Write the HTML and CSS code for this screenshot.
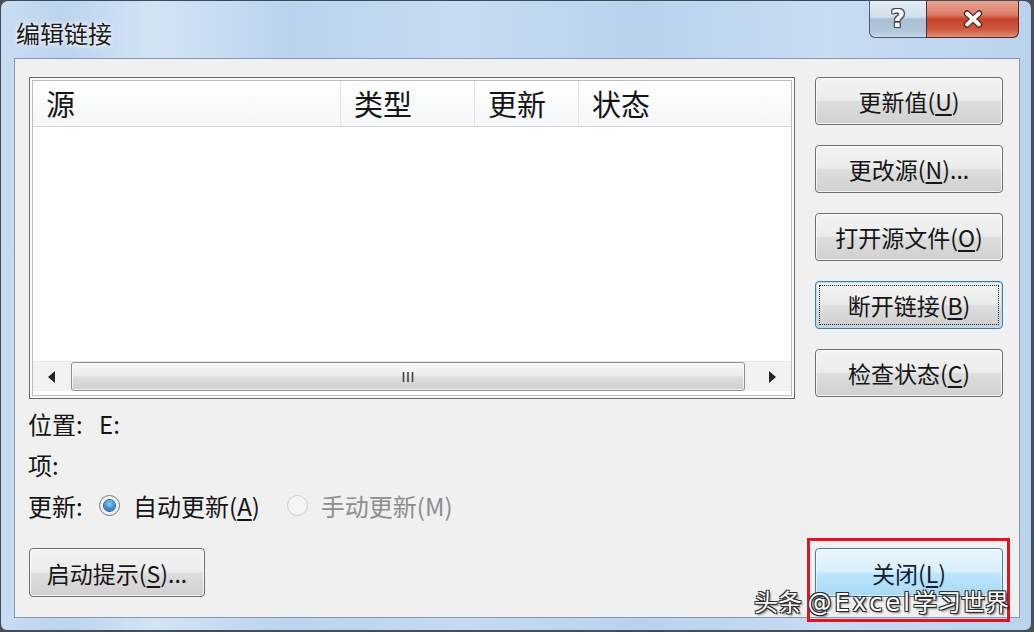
FILE: index.html
```html
<!DOCTYPE html>
<html>
<head>
<link rel="stylesheet" href="styles.css">
</head>
<body>

<div class="window">
  <!-- 标题栏 -->
  <div class="titlebar">
    <span class="title">编辑链接</span>
    <div class="caption-btns">
      <span class="cap help">?</span>
      <span class="cap close">
        <svg width="22" height="18" viewBox="0 0 22 18">
          <path d="M5 3.5 L17 14.5 M17 3.5 L5 14.5" stroke="#4a2620" stroke-width="6.4" stroke-linecap="round"/>
          <path d="M5 3.5 L17 14.5 M17 3.5 L5 14.5" stroke="#fff" stroke-width="3.8" stroke-linecap="round"/>
        </svg>
      </span>
    </div>
  </div>

  <!-- 对话框内容 -->
  <div class="client">
    <div class="left">
      <div class="listbox">
        <div class="list-frame">
          <div class="list-head">
            <div class="col c1">源</div>
            <div class="col c2">类型</div>
            <div class="col c3">更新</div>
            <div class="col c4">状态</div>
          </div>
          <div class="list-body"></div>
          <div class="hscroll">
            <div class="arrow">
              <svg width="8" height="12" viewBox="0 0 8 12"><polygon points="7,0 7,12 0,6" fill="#222"/></svg>
            </div>
            <div class="track">
              <div class="thumb">
                <svg width="14" height="10" viewBox="0 0 14 10">
                  <path d="M2.5 0 V10 M7 0 V10 M11.5 0 V10" stroke="#444" stroke-width="1.6"/>
                </svg>
              </div>
            </div>
            <div class="arrow">
              <svg width="8" height="12" viewBox="0 0 8 12"><polygon points="1,0 1,12 8,6" fill="#222"/></svg>
            </div>
          </div>
        </div>
      </div>

      <div class="info">
        <div class="info-row"><span class="lbl">位置:</span><span>E:</span></div>
        <div class="info-row"><span class="lbl">项:</span></div>
        <div class="info-row">
          <span class="lbl">更新:</span>
          <label class="radio"><span class="dot checked"></span><span>自动更新(<u>A</u>)</span></label>
          <label class="radio disabled"><span class="dot"></span><span>手动更新(M)</span></label>
        </div>
      </div>

      <button class="btn startup">启动提示(<u>S</u>)...</button>
    </div>

    <div class="right">
      <button class="btn">更新值(<u>U</u>)</button>
      <button class="btn">更改源(<u>N</u>)...</button>
      <button class="btn">打开源文件(<u>O</u>)</button>
      <button class="btn focused">断开链接(<u>B</u>)</button>
      <button class="btn">检查状态(<u>C</u>)</button>
      <div class="close-wrap">
        <button class="btn default">关闭(<u>L</u>)</button>
      </div>
    </div>
  </div>

  <div class="watermark">头条 <span class="wm-latin">@Excel</span>学习世界</div>
</div>

</body>
</html>
```

FILE: styles.css
```css
/* 页面与窗口 */
body {
  margin: 0;
  background: #4b4e52;
  font-family: "Noto Sans CJK SC", sans-serif;
  color: #151515;
}
.window {
  width: 1032px;
  height: 631px;
  box-sizing: border-box;
  border: 1px solid #3f4b58;
  border-radius: 8px 8px 7px 7px;
  background:
    linear-gradient(90deg, #c9dcf1 0%, #bcd4ee 6%, #d3e4f5 15%, #bad3ee 28%, #c6dbf1 45%, #b8d2ee 62%, #c8dcf2 80%, #bad3ee 100%);
  position: relative;
  display: flex;
  flex-direction: column;
  overflow: hidden;
}

/* 标题栏 */
.titlebar {
  height: 57px;
  display: flex;
  justify-content: space-between;
  align-items: flex-start;
}
.title {
  margin: 17px 0 0 15px;
  font-size: 24px;
  line-height: 30px;
  color: #1a1a1a;
  text-shadow: 0 0 6px rgba(255, 255, 255, 0.95), 0 0 3px rgba(255, 255, 255, 0.9);
}
.caption-btns {
  display: flex;
  margin-right: 12px;
  margin-top: -1px;
}
.cap {
  height: 38px;
  box-sizing: border-box;
  display: flex;
  align-items: center;
  justify-content: center;
  border: 1px solid #4f5e70;
  border-top: none;
}
.cap.help {
  width: 57px;
  border-right: none;
  border-radius: 0 0 0 6px;
  background: linear-gradient(#e6eef6 0%, #d2deeb 46%, #aabfd6 52%, #b3c6dc 85%, #c9d8e8 100%);
  font-family: "DejaVu Sans", sans-serif;
  font-weight: bold;
  font-size: 25px;
  line-height: 30px;
  color: #fff;
  text-shadow: 1px 0 0 #3a4450, -1px 0 0 #3a4450, 0 1px 0 #3a4450, 0 -1px 0 #3a4450,
    1px 1px 0 #3a4450, -1px -1px 0 #3a4450, 1px -1px 0 #3a4450, -1px 1px 0 #3a4450;
}
.cap.close {
  width: 93px;
  border-color: #5a2a22;
  border-radius: 0 0 6px 0;
  background: linear-gradient(#eaa898 0%, #dc7e66 40%, #c5412a 52%, #cf5a3f 80%, #e2907a 100%);
}

/* 内容区 */
.client {
  flex: 1;
  margin: 0 11px 12px 13px;
  border: 1px solid #8399b1;
  background: #f0f0f0;
  display: flex;
  gap: 20px;
  padding: 18px 16px 20px 14px;
}
.left {
  width: 766px;
  display: flex;
  flex-direction: column;
}

/* 列表框 */
.listbox {
  height: 322px;
  box-sizing: border-box;
  border: 1px solid #646b73;
  padding: 2px;
  background: #fafafa;
  display: flex;
}
.list-frame {
  flex: 1;
  border: 1px solid #b9bcc0;
  background: #fff;
  display: flex;
  flex-direction: column;
  padding-bottom: 4px;
}
.list-head {
  height: 45px;
  display: flex;
  border-bottom: 1px solid #d5d5d5;
  background: linear-gradient(#ffffff, #f4f6f8);
  font-size: 29px;
  line-height: 45px;
}
.col {
  padding-left: 13px;
  box-sizing: border-box;
  border-right: 1px solid #e2e4e7;
}
.c1 { width: 308px; }
.c2 { width: 134px; }
.c3 { width: 104px; }
.c4 { flex: 1; border-right: none; }
.list-body {
  flex: 1;
}
.hscroll {
  height: 29px;
  display: flex;
  background: #f2f2f2;
  border-top: 1px solid #eaeaea;
}
.arrow {
  width: 38px;
  display: flex;
  align-items: center;
  justify-content: center;
}
.track {
  flex: 1;
  display: flex;
  padding: 0 8px 0 0;
}
.thumb {
  flex: 1;
  border: 1px solid #8f8f8f;
  border-radius: 3px;
  background: linear-gradient(#f6f6f6 0%, #ececec 45%, #dcdcdc 55%, #cfcfcf 100%);
  box-shadow: inset 0 0 0 1px rgba(255, 255, 255, 0.7);
  display: flex;
  align-items: center;
  justify-content: center;
}

/* 位置 / 项 / 更新 */
.info {
  margin-top: 4px;
  display: flex;
  flex-direction: column;
  gap: 1px;
  font-size: 24px;
}
.info-row {
  height: 40px;
  display: flex;
  align-items: center;
}
.lbl {
  width: 71px;
  margin-left: -1px;
}
.radio {
  display: flex;
  align-items: center;
  gap: 13px;
  margin-right: 27px;
}
.radio u {
  text-underline-offset: 3px;
}
.radio.disabled {
  color: #8e8e8e;
}
.dot {
  width: 21px;
  height: 21px;
  box-sizing: border-box;
  border-radius: 50%;
  border: 1px solid #6f7a86;
  background: radial-gradient(circle at 50% 40%, #ffffff, #e2e6ea);
  display: flex;
  align-items: center;
  justify-content: center;
}
.dot.checked::after {
  content: "";
  width: 11px;
  height: 11px;
  border-radius: 50%;
  background: radial-gradient(circle at 50% 35%, #9bd2f8 0%, #3d93d8 50%, #14549a 100%);
  box-shadow: 0 0 0 1px #2b5f93;
}
.radio.disabled .dot {
  border-color: #c8ccd0;
  background: #f5f5f5;
}

/* 按钮 */
.btn {
  font-family: inherit;
  font-size: 23px;
  color: #151515;
  height: 48px;
  padding: 0;
  border: 1px solid #6f6f6f;
  border-radius: 4px;
  background: linear-gradient(#f3f3f3 0%, #ececec 48%, #dddddd 52%, #d0d0d0 100%);
  box-shadow: inset 0 0 0 1px rgba(255, 255, 255, 0.75);
  position: relative;
}
.btn u {
  text-underline-offset: 3px;
}
.startup {
  width: 176px;
  height: 49px;
  margin-top: auto;
}
.right {
  width: 188px;
  display: flex;
  flex-direction: column;
  gap: 20px;
}
.btn.focused {
  border-color: #3c7fb1;
  box-shadow: inset 0 0 0 1px #b7dcf4;
}
.btn.focused::after {
  content: "";
  position: absolute;
  inset: 3px;
  border: 1px dotted #222;
}
.close-wrap {
  margin-top: auto;
  position: relative;
}
.close-wrap::before {
  content: "";
  position: absolute;
  left: -8px;
  right: -7px;
  top: -10px;
  bottom: -25px;
  border: 3px solid #e0151f;
}
.btn.default {
  width: 188px;
  height: 49px;
  border-color: #3c7fb1;
  background: linear-gradient(#eaf6fd 0%, #d9f0fc 48%, #bee6fd 52%, #a7d9f5 100%);
  box-shadow: inset 0 0 0 1px rgba(255, 255, 255, 0.6);
  color: #0e2234;
}

/* 水印 */
.watermark {
  position: absolute;
  left: 753px;
  top: 585px;
  font-size: 24px;
  line-height: 30px;
  color: #fff;
  white-space: nowrap;
  text-shadow: 1px 1px 0 #2a2a2a, -1px -1px 0 #2a2a2a, 1px -1px 0 #2a2a2a, -1px 1px 0 #2a2a2a, 2px 2px 2px rgba(0, 0, 0, 0.5);
}
.wm-latin {
  font-family: "DejaVu Sans", sans-serif;
  letter-spacing: 3px;
}
```
